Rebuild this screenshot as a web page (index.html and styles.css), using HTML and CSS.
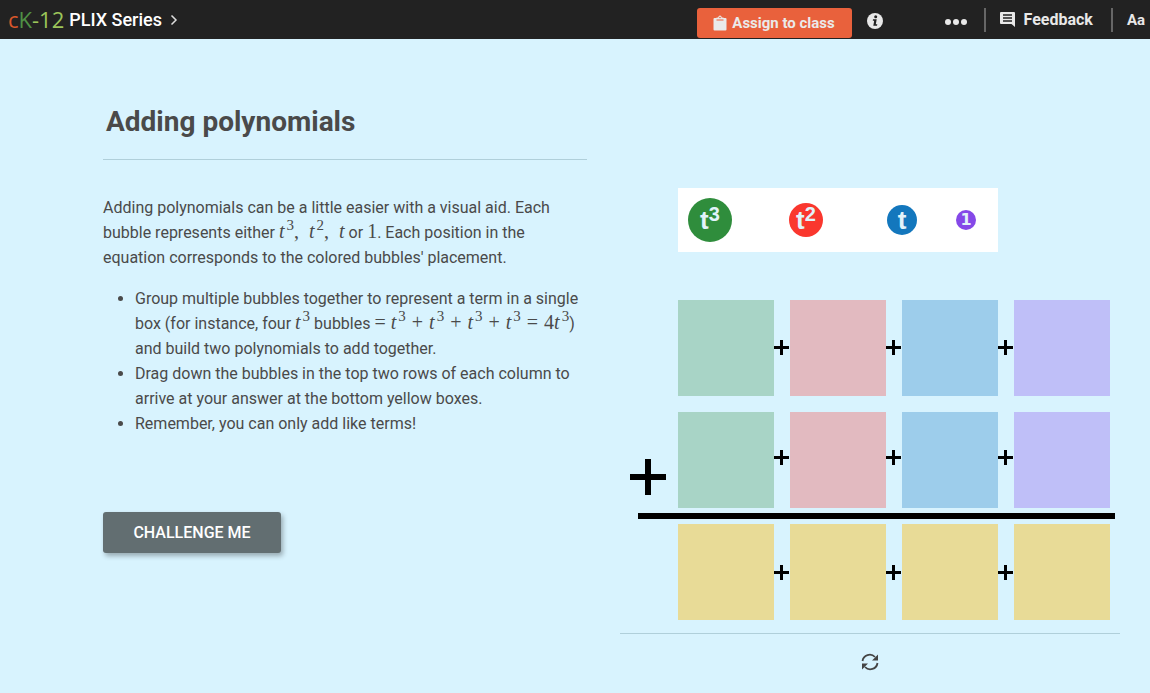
FILE: index.html
```html
<!DOCTYPE html>
<html lang="en">
<head>
    <meta charset="UTF-8">
    <meta name="viewport" content="width=device-width, initial-scale=1.0">
    <title>Adding polynomials</title>
    <link rel="stylesheet" href="styles.css">
</head>
<body>
    <header class="topbar">
        <a href="#" class="logo"><span class="logo-c">c</span><span class="logo-k">K</span>-12</a>
        <a href="#" class="series">PLIX Series
            <svg width="8" height="12" viewBox="0 0 8 12"><path d="M1.500 1.500 6 6l-4.500 4.500" fill="none" stroke="#ddd" stroke-width="1.500"/></svg>
        </a>
        <button class="assign">
            <svg width="14" height="16" viewBox="0 0 14 16"><path d="M1.500 3H12.500Q13.500 3 13.500 4V14.500Q13.500 15.500 12.500 15.500H1.500Q.5 15.500 .5 14.500V4Q.5 3 1.500 3Z" fill="#eaeaea"/><path d="M3.500 4.500V2.500H5.200Q5.500 .5 7 .5T8.800 2.500H10.500V4.500Z" fill="#eaeaea"/><path d="M3.500 5H10.500" stroke="#e9613c" stroke-width="1"/><circle cx="7" cy="2.500" r=".8" fill="#e9613c"/></svg>
            Assign to class
        </button>
        <button class="info" aria-label="Info">
            <svg width="16" height="16" viewBox="0 0 16 16"><circle cx="8" cy="8" r="8" fill="#e8e8e8"/><circle cx="8.700" cy="3.800" r="1.500" fill="#222"/><path d="M6 6.300H9.700L8.800 11.300H10.300L10 12.800H6.300L7.200 7.800H5.800Z" fill="#222"/></svg>
        </button>
        <nav class="tools">
            <button class="more" aria-label="More">
                <svg width="22" height="6" viewBox="0 0 22 6" fill="#e8e8e8"><circle cx="3" cy="3" r="3"/><circle cx="11" cy="3" r="3"/><circle cx="19" cy="3" r="3"/></svg>
            </button>
            <button class="feedback">
                <svg width="16" height="16" viewBox="0 0 16 16"><path d="M1 0H14Q15 0 15 1V15L11.500 12H1Q0 12 0 11V1Q0 0 1 0Z" fill="#e8e8e8"/><path d="M3 3H12M3 6H12M3 9H12" stroke="#222" stroke-width="1.300"/></svg>
                Feedback
            </button>
            <button class="font-size">Aa</button>
        </nav>
    </header>

    <main class="page">
        <section class="lesson">
            <h1>Adding polynomials</h1>
            <p>Adding polynomials can be a little easier with a visual aid. Each bubble represents either <span class="math"><i>t</i><sup>3</sup>,&nbsp; <i>t</i><sup>2</sup>,&nbsp; <i>t</i></span> or <span class="math">1</span>. Each position in the equation corresponds to the colored bubbles' placement.</p>
            <ul>
                <li>Group multiple bubbles together to represent a term in a single box (for instance, four <span class="math"><i>t</i><sup>3</sup></span> bubbles <span class="math">= <i>t</i><sup>3</sup><span class="op">+</span><i>t</i><sup>3</sup><span class="op">+</span><i>t</i><sup>3</sup><span class="op">+</span><i>t</i><sup>3</sup><span class="op">=</span>4<i>t</i><sup>3</sup></span>) and build two polynomials to add together.</li>
                <li>Drag down the bubbles in the top two rows of each column to arrive at your answer at the bottom yellow boxes.</li>
                <li>Remember, you can only add like terms!</li>
            </ul>
            <button class="challenge">CHALLENGE ME</button>
        </section>

        <section class="activity">
            <div class="tray">
                <div class="slot"><span class="bubble cubic">t<sup>3</sup></span></div>
                <div class="slot"><span class="bubble square">t<sup>2</sup></span></div>
                <div class="slot"><span class="bubble linear">t</span></div>
                <div class="slot"><span class="bubble unit">1</span></div>
            </div>

            <div class="board">
                <div class="row">
                    <span class="lead"></span>
                    <div class="box green"></div><span class="plus"></span>
                    <div class="box pink"></div><span class="plus"></span>
                    <div class="box blue"></div><span class="plus"></span>
                    <div class="box violet"></div>
                </div>
                <div class="row second">
                    <span class="lead"><span class="plus big"></span></span>
                    <div class="box green"></div><span class="plus"></span>
                    <div class="box pink"></div><span class="plus"></span>
                    <div class="box blue"></div><span class="plus"></span>
                    <div class="box violet"></div>
                </div>
                <div class="sum-line"></div>
                <div class="row last">
                    <span class="lead"></span>
                    <div class="box yellow"></div><span class="plus"></span>
                    <div class="box yellow"></div><span class="plus"></span>
                    <div class="box yellow"></div><span class="plus"></span>
                    <div class="box yellow"></div>
                </div>
            </div>

            <footer class="controls">
                <button class="reset" aria-label="Reset">
                    <svg width="18" height="18" viewBox="0 0 18 18"><path d="M1.500 8A7.300 7.300 0 0 1 14 4M16.500 10A7.300 7.300 0 0 1 4 14" fill="none" stroke="#444" stroke-width="1.800"/><path d="M17 1.500V7.500H11ZM1 16.500V10.500H7Z" fill="#444"/></svg>
                </button>
            </footer>
        </section>
    </main>
</body>
</html>
```

FILE: styles.css
```css
* {
    box-sizing: border-box;
}
body {
    margin: 0;
    font-family: Roboto, sans-serif;
    font-size: 16px;
    line-height: 25px;
    color: #4a4a4a;
    background-color: #d8f3fe;
}
button {
    font-family: inherit;
    border: none;
    background: none;
    padding: 0;
    cursor: pointer;
}

/* top bar */
.topbar {
    display: flex;
    align-items: center;
    height: 39px;
    padding-left: 8px;
    background: #222;
}
.logo {
    font-family: "Open Sans", sans-serif;
    font-size: 22px;
    color: #9cc55a;
    text-decoration: none;
}
.logo-c {
    color: #d9572b;
}
.logo-k {
    color: #4f9145;
}
.series {
    display: flex;
    align-items: center;
    gap: 8px;
    margin-left: 5px;
    font-size: 18px;
    font-weight: 500;
    color: #fff;
    text-decoration: none;
}
.assign {
    display: flex;
    align-items: center;
    justify-content: center;
    gap: 5px;
    width: 155px;
    height: 30px;
    margin-left: auto;
    align-self: flex-end;
    margin-bottom: 1px;
    border-radius: 3px;
    background: #e9613c;
    color: #eaeaea;
    font-size: 15px;
    font-weight: 700;
}
.info {
    display: flex;
    margin: 2px 0 0 15px;
}
.tools {
    display: flex;
    align-items: center;
    margin-left: 62px;
    padding-right: 4px;
}
.tools button {
    height: 24px;
    color: #e8e8e8;
    font-size: 15px;
    font-weight: 700;
}
.more {
    display: flex;
    align-items: center;
    padding: 4px 17px 0 0;
}
.tools .feedback {
    display: flex;
    align-items: center;
    gap: 8px;
    padding: 0 18px 0 14px;
    border-left: 2px solid #666;
    border-right: 2px solid #666;
    font-size: 16px;
}
.tools .font-size {
    padding: 0 1px 0 14px;
}

/* content */
.page {
    display: grid;
    grid-template-columns: 484fr 500fr;
    gap: 33px;
    padding: 0 30px 0 103px;
}
.lesson h1 {
    margin: 0 0 35px;
    padding: 65px 0 19px 3px;
    border-bottom: 1px solid #b0cfda;
    font-size: 28px;
    line-height: 36px;
    font-weight: 700;
}
.lesson p {
    margin: 0 0 16px;
    padding-right: 16px;
}
.lesson ul {
    margin: 0 0 76px;
    padding-left: 32px;
}
.math {
    font-family: "Liberation Serif", serif;
    font-size: 20px;
    line-height: 20px;
    white-space: nowrap;
}
.math sup {
    padding-left: 2px;
    font-size: 15px;
    line-height: 0;
}
.op {
    margin: 0 6px;
}
.challenge {
    width: 178px;
    height: 41px;
    border-radius: 3px;
    background: #626e71;
    box-shadow: 2px 3px 5px rgba(0, 0, 0, 0.3);
    color: #fff;
    font-size: 16px;
    font-weight: 500;
}

/* bubbles */
.activity {
    padding-top: 149px;
}
.tray {
    display: grid;
    grid-template-columns: 64px 128px 64px 64px;
    width: 320px;
    height: 64px;
    margin: 0 0 48px 58px;
    background: #fff;
}
.slot {
    display: flex;
    align-items: center;
    justify-content: center;
}
.bubble {
    display: flex;
    align-items: center;
    justify-content: center;
    border-radius: 50%;
    color: #e2f3fa;
    font-family: "Liberation Sans", sans-serif;
    font-weight: 700;
    font-size: 26px;
    line-height: 1;
}
.bubble sup {
    font-size: 20px;
    line-height: 1;
    padding-bottom: 12px;
}
.cubic {
    width: 44px;
    height: 44px;
    background: #2f8d3c;
}
.square {
    width: 34px;
    height: 34px;
    background: #fa372e;
}
.linear {
    width: 30px;
    height: 30px;
    background: #1377bd;
}
.unit {
    width: 20px;
    height: 20px;
    background: #8548e8;
    font-family: "DejaVu Sans", sans-serif;
    font-size: 16px;
}

/* board */
.board {
    margin-left: 10px;
}
.row {
    display: grid;
    grid-template-columns: 48px 96px 16px 96px 16px 96px 16px 96px;
    align-items: center;
    margin-bottom: 16px;
}
.row.second {
    margin-bottom: 5px;
}
.row.last {
    margin-bottom: 13px;
}
.box {
    height: 96px;
}
.green {
    background: #a8d4c6;
}
.pink {
    background: #e2bac0;
}
.blue {
    background: #9dcdeb;
}
.violet {
    background: #bfbff8;
}
.yellow {
    background: #e8db97;
}
.plus {
    display: block;
    height: 15px;
    margin: 0 1px 2px 0;
    background:
        linear-gradient(#000, #000) center / 100% 3px no-repeat,
        linear-gradient(#000, #000) center / 3px 100% no-repeat;
}
.second .plus {
    margin-bottom: 6px;
}
.last .plus {
    margin-bottom: 0;
}
.second .plus.big {
    width: 36px;
    height: 36px;
    margin: 34px 0 0;
    background:
        linear-gradient(#000, #000) center / 100% 6px no-repeat,
        linear-gradient(#000, #000) center / 6px 100% no-repeat;
}
.sum-line {
    width: 477px;
    height: 6px;
    margin: 0 0 5px 8px;
    background: #000;
}
.controls {
    padding-top: 19px;
    border-top: 1px solid #b0cfda;
    text-align: center;
}
.reset {
    line-height: 0;
}
```
